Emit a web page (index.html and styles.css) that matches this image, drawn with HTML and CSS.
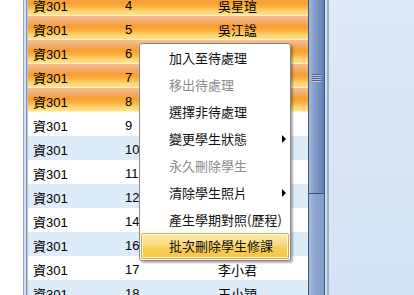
FILE: index.html
```html
<!DOCTYPE html>
<html>
<head>
<meta charset="utf-8">
<link rel="stylesheet" href="styles.css">
</head>
<body>
<div class="app">
  <div class="gutter"></div>
  <div class="frame"></div>
  <div class="grid-wrap">
    <div class="rows">
      <div class="row sel"><span>資301</span><span>4</span><span>吳星瑄</span></div>
      <div class="row sel"><span>資301</span><span>5</span><span>吳江諡</span></div>
      <div class="row sel"><span>資301</span><span>6</span><span></span></div>
      <div class="row sel"><span>資301</span><span>7</span><span></span></div>
      <div class="row sel"><span>資301</span><span>8</span><span></span></div>
      <div class="row"><span>資301</span><span>9</span><span></span></div>
      <div class="row alt"><span>資301</span><span>10</span><span></span></div>
      <div class="row"><span>資301</span><span>11</span><span></span></div>
      <div class="row alt"><span>資301</span><span>12</span><span></span></div>
      <div class="row"><span>資301</span><span>14</span><span></span></div>
      <div class="row alt"><span>資301</span><span>16</span><span></span></div>
      <div class="row"><span>資301</span><span>17</span><span>李小君</span></div>
      <div class="row alt"><span>資301</span><span>18</span><span>王小穎</span></div>
    </div>
  </div>
  <div class="scrollbar">
    <div class="thumb"><div class="grip"></div></div>
    <div class="track"></div>
  </div>
  <div class="splitter"></div>
  <div class="pane"></div>

  <div class="menu">
    <div class="item">加入至待處理</div>
    <div class="item disabled">移出待處理</div>
    <div class="item">選擇非待處理</div>
    <div class="item sub">變更學生狀態</div>
    <div class="item disabled">永久刪除學生</div>
    <div class="item sub">清除學生照片</div>
    <div class="item">產生學期對照(歷程)</div>
    <div class="item hot">批次刪除學生修課</div>
  </div>
</div>
</body>
</html>
```

FILE: styles.css
```css
html, body {
  margin: 0;
  padding: 0;
  width: 414px;
  height: 295px;
  overflow: hidden;
  background: #fff;
}

.app {
  position: relative;
  display: flex;
  width: 414px;
  height: 295px;
  overflow: hidden;
  font-family: "Liberation Sans", "Noto Sans CJK TC", sans-serif;
  font-size: 13px;
  color: #000;
}

.gutter {
  width: 23px;
  flex: none;
  background: #fff;
}

.frame {
  width: 5px;
  flex: none;
  background: linear-gradient(to right, #9ba6b9 0, #9ba6b9 1px, #d6dfee 1px, #d6dfee 3px, #7d92b7 3px, #7d92b7 4px, #b9c8e0 4px);
}

.grid-wrap {
  width: 280px;
  flex: none;
  overflow: hidden;
}

.rows {
  margin-top: -8px;
}

.row {
  display: grid;
  grid-template-columns: 92px 93px 1fr;
  height: 24px;
  align-items: center;
  background: #fff;
}

.row span {
  padding-left: 5px;
  padding-top: 2px;
  white-space: nowrap;
}

.row.alt {
  background: #deebf8;
}

.row.sel {
  background: linear-gradient(to bottom,
    #f6c08e 0%,
    #f2ad72 22%,
    #fa9d30 42%,
    #fbad3a 58%,
    #fcd06a 78%,
    #fde38e 94%,
    #fff3c2 96%,
    #fff3c2 100%);
}

.scrollbar {
  width: 15px;
  flex: none;
  border-left: 1px solid #3e5784;
  border-right: 1px solid #3e5784;
  display: flex;
  flex-direction: column;
}

.thumb {
  height: 193px;
  flex: none;
  border-bottom: 1px solid #34507e;
  background: linear-gradient(to right, #a3b8da 0%, #86a0cb 35%, #7592c2 65%, #5f7db0 100%);
  display: flex;
  justify-content: center;
}

.grip {
  margin-top: 74px;
  width: 9px;
  height: 8px;
  background: repeating-linear-gradient(to bottom, #4b6691 0, #4b6691 1px, #b7c7e2 1px, #b7c7e2 2px);
}

.track {
  flex: 1;
  background: linear-gradient(to right, #a6bcdd 0%, #8da9d2 40%, #7f9cc9 100%);
}

.splitter {
  width: 4px;
  flex: none;
  background: linear-gradient(to right, #d4e0f0 0, #d4e0f0 2px, #9cb1d2 2px, #9cb1d2 4px);
}

.pane {
  flex: 1;
  background: linear-gradient(to bottom, #dfe9f7, #d4e2f3);
}

.menu {
  position: absolute;
  left: 139px;
  top: 43px;
  width: 150px;
  padding: 0;
  background: #fff;
  border: 1px solid #8a8a8a;
  border-radius: 3px;
  box-shadow: 2px 2px 2px rgba(0, 0, 0, 0.3);
  font-family: "Noto Sans CJK TC", sans-serif;
  font-size: 13px;
}

.item {
  position: relative;
  height: 27px;
  line-height: 27px;
  padding-left: 28px;
  color: #111;
  box-sizing: border-box;
  margin: 0 1px;
}

.item.disabled {
  color: #8d8d8d;
}

.item.sub::after {
  content: "";
  position: absolute;
  right: 3px;
  top: 10px;
  border-left: 4px solid #000;
  border-top: 4px solid transparent;
  border-bottom: 4px solid transparent;
}

.item.hot {
  height: 26px;
  line-height: 24px;
  margin-bottom: 1px;
  border: 1px solid #dcaa3c;
  border-radius: 2px;
  padding-left: 27px;
  background: linear-gradient(to bottom, #fdeaa8 0%, #fbdc86 40%, #f7cd58 60%, #f5c546 100%);
  box-shadow: inset 0 0 0 1px rgba(255, 255, 240, 0.8);
}
```
